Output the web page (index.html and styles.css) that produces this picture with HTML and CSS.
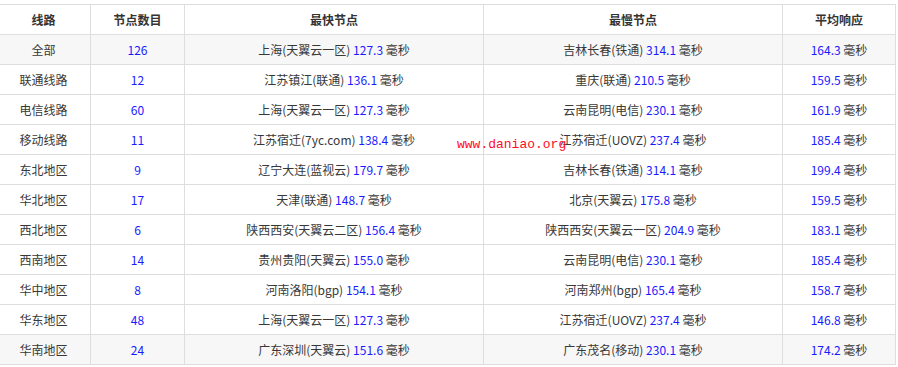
FILE: index.html
```html
<!DOCTYPE html>
<html lang="zh-CN">
<head>
<meta charset="utf-8">
<title>线路测速</title>
<link rel="stylesheet" href="styles.css">
</head>
<body>
<div class="wrap">
<table class="speed">
  <colgroup>
    <col class="c1"><col class="c2"><col class="c3"><col class="c4"><col class="c5">
  </colgroup>
  <thead>
    <tr><th>线路</th><th>节点数目</th><th>最快节点</th><th>最慢节点</th><th>平均响应</th></tr>
  </thead>
  <tbody>
    <tr class="alt"><td>全部</td><td><span class="n">126</span></td><td>上海(天翼云一区) <span class="n">127.3</span> 毫秒</td><td>吉林长春(铁通) <span class="n">314.1</span> 毫秒</td><td><span class="n">164.3</span> 毫秒</td></tr>
    <tr><td>联通线路</td><td><span class="n">12</span></td><td>江苏镇江(联通) <span class="n">136.1</span> 毫秒</td><td>重庆(联通) <span class="n">210.5</span> 毫秒</td><td><span class="n">159.5</span> 毫秒</td></tr>
    <tr><td>电信线路</td><td><span class="n">60</span></td><td>上海(天翼云一区) <span class="n">127.3</span> 毫秒</td><td>云南昆明(电信) <span class="n">230.1</span> 毫秒</td><td><span class="n">161.9</span> 毫秒</td></tr>
    <tr><td>移动线路</td><td><span class="n">11</span></td><td>江苏宿迁(7yc.com) <span class="n">138.4</span> 毫秒</td><td>江苏宿迁(UOVZ) <span class="n">237.4</span> 毫秒</td><td><span class="n">185.4</span> 毫秒</td></tr>
    <tr><td>东北地区</td><td><span class="n">9</span></td><td>辽宁大连(蓝视云) <span class="n">179.7</span> 毫秒</td><td>吉林长春(铁通) <span class="n">314.1</span> 毫秒</td><td><span class="n">199.4</span> 毫秒</td></tr>
    <tr><td>华北地区</td><td><span class="n">17</span></td><td>天津(联通) <span class="n">148.7</span> 毫秒</td><td>北京(天翼云) <span class="n">175.8</span> 毫秒</td><td><span class="n">159.5</span> 毫秒</td></tr>
    <tr><td>西北地区</td><td><span class="n">6</span></td><td>陕西西安(天翼云二区) <span class="n">156.4</span> 毫秒</td><td>陕西西安(天翼云一区) <span class="n">204.9</span> 毫秒</td><td><span class="n">183.1</span> 毫秒</td></tr>
    <tr><td>西南地区</td><td><span class="n">14</span></td><td>贵州贵阳(天翼云) <span class="n">155.0</span> 毫秒</td><td>云南昆明(电信) <span class="n">230.1</span> 毫秒</td><td><span class="n">185.4</span> 毫秒</td></tr>
    <tr><td>华中地区</td><td><span class="n">8</span></td><td>河南洛阳(bgp) <span class="n">154.1</span> 毫秒</td><td>河南郑州(bgp) <span class="n">165.4</span> 毫秒</td><td><span class="n">158.7</span> 毫秒</td></tr>
    <tr><td>华东地区</td><td><span class="n">48</span></td><td>上海(天翼云一区) <span class="n">127.3</span> 毫秒</td><td>江苏宿迁(UOVZ) <span class="n">237.4</span> 毫秒</td><td><span class="n">146.8</span> 毫秒</td></tr>
    <tr class="alt"><td>华南地区</td><td><span class="n">24</span></td><td>广东深圳(天翼云) <span class="n">151.6</span> 毫秒</td><td>广东茂名(移动) <span class="n">230.1</span> 毫秒</td><td><span class="n">174.2</span> 毫秒</td></tr>
  </tbody>
</table>
<div class="watermark">www.daniao.org</div>
</div>
</body>
</html>
```

FILE: styles.css
```css
html, body {
  margin: 0;
  padding: 0;
  background: #fff;
}
.wrap {
  position: relative;
  padding-top: 4px;
}
.speed {
  border-collapse: collapse;
  table-layout: fixed;
  width: 899px;
  margin-left: -4px;
  font-family: "Noto Sans CJK SC", "Noto Sans", sans-serif;
  font-size: 12px;
  color: #383838;
}
.c1 { width: 94px; }
.c2 { width: 94px; }
.c3 { width: 299px; }
.c4 { width: 299px; }
.c5 { width: 113px; }
.speed th,
.speed td {
  border: 1px solid #dedede;
  height: 30px;
  padding: 0 4px;
  box-sizing: border-box;
  text-align: center;
  vertical-align: middle;
  line-height: 16px;
  white-space: nowrap;
}
.speed th {
  font-weight: bold;
  color: #333;
}
.speed tr.alt td {
  background: #f7f7f7;
}
.n {
  color: #1a1aff;
}
.watermark {
  position: absolute;
  left: 457px;
  top: 137px;
  font-family: "Liberation Mono", monospace;
  font-size: 13px;
  color: #ff0a1e;
  line-height: 16px;
}
```
